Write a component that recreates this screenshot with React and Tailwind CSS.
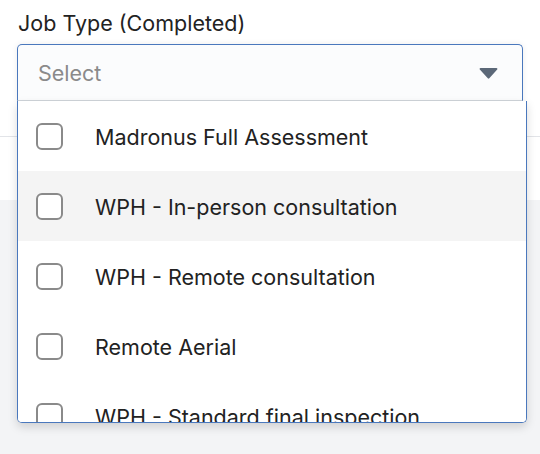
import React from "react";

const items = [
  "Madronus Full Assessment",
  "WPH - In-person consultation",
  "WPH - Remote consultation",
  "Remote Aerial",
  "WPH - Standard final inspection",
];

function Checkbox() {
  return <span className="block h-[27px] w-[27px] shrink-0 rounded-[6px] border-[2.5px] border-[#8a8a8a] bg-white" />;
}

export default function App() {
  return (
    <div
      className="relative h-[454px] w-[540px] overflow-hidden bg-[#f3f4f6] text-[#222]"
      style={{ fontFamily: "Inter, 'Noto Sans', sans-serif" }}
    >
      <div className="flex h-[200px] flex-col bg-white">
        <div className="pl-[18px] pt-[9px] text-[21.5px] leading-[28px] text-[#222]">Job Type (Completed)</div>
        <div className="mx-[17px] mt-[7px] flex h-[57px] items-center justify-between rounded-t-[5px] border border-[#4a78bd] border-b-[#cfd4da] bg-[#fbfcfd] pb-[1px] pl-[20px] pr-[27px] shadow-[0_0_6px_rgba(0,0,0,0.08)]">
          <span className="pt-[3px] text-[21.5px] leading-none text-[#8a8a8a]">Select</span>
          <svg width="19" height="12" viewBox="0 0 19 12" className="mr-[-3px] mt-[1px]">
            <path d="M1.5 1h16a1 1 0 0 1 .7 1.6l-7.9 8.6a1 1 0 0 1-1.5 0L.8 2.6A1 1 0 0 1 1.5 1z" fill="#5b6878" />
          </svg>
        </div>
        <div className="mt-[35px] border-b border-[#e2e4e8]" />
      </div>

      <div className="absolute left-[17px] top-[101px] h-[322px] w-[510px] overflow-hidden rounded-b-[5px] border border-t-0 border-[#4a78bd] bg-white shadow-[0_4px_10px_rgba(0,0,0,0.15)]">
        {items.map((t, i) => (
          <div
            key={t}
            className={`flex h-[70px] items-center gap-[32px] pl-[18px] ${i === 1 ? "bg-[#f4f4f4]" : "bg-white"}`}
          >
            <Checkbox />
            <span className="whitespace-nowrap pt-[3px] text-[21.5px] leading-none text-[#222]">{t}</span>
          </div>
        ))}
      </div>
    </div>
  );
}
